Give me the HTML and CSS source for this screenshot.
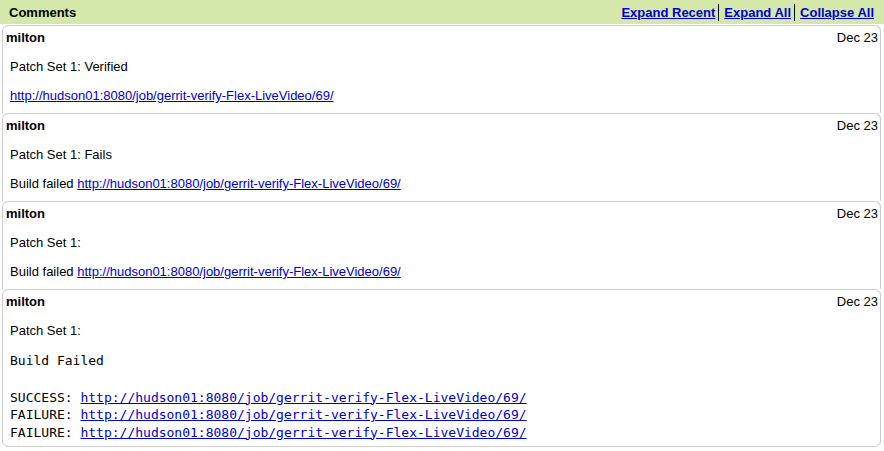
FILE: index.html
```html
<!DOCTYPE html>
<html>
<head>
<meta charset="utf-8">
<link rel="stylesheet" href="styles.css">
</head>
<body>
<div class="header">
  <span class="title">Comments</span>
  <span class="actions">
    <a href="#" class="action first">Expand Recent</a><a href="#" class="action">Expand All</a><a href="#" class="action">Collapse All</a>
  </span>
</div>

<div class="panel">
  <div class="panel-head"><span class="author">milton</span><span class="date">Dec 23</span></div>
  <div class="msg">
    <p>Patch Set 1: Verified</p>
    <p><a href="#">http://hudson01:8080/job/gerrit-verify-Flex-LiveVideo/69/</a></p>
  </div>
</div>

<div class="panel">
  <div class="panel-head"><span class="author">milton</span><span class="date">Dec 23</span></div>
  <div class="msg">
    <p>Patch Set 1: Fails</p>
    <p>Build failed <a href="#">http://hudson01:8080/job/gerrit-verify-Flex-LiveVideo/69/</a></p>
  </div>
</div>

<div class="panel">
  <div class="panel-head"><span class="author">milton</span><span class="date">Dec 23</span></div>
  <div class="msg">
    <p>Patch Set 1:</p>
    <p>Build failed <a href="#">http://hudson01:8080/job/gerrit-verify-Flex-LiveVideo/69/</a></p>
  </div>
</div>

<div class="panel last">
  <div class="panel-head"><span class="author">milton</span><span class="date">Dec 23</span></div>
  <div class="msg">
    <p>Patch Set 1:</p>
    <pre class="code gap">Build Failed</pre>
    <pre class="code">SUCCESS: <a href="#">http://hudson01:8080/job/gerrit-verify-Flex-LiveVideo/69/</a>
FAILURE: <a href="#">http://hudson01:8080/job/gerrit-verify-Flex-LiveVideo/69/</a>
FAILURE: <a href="#">http://hudson01:8080/job/gerrit-verify-Flex-LiveVideo/69/</a></pre>
  </div>
</div>
</body>
</html>
```

FILE: styles.css
```css
html, body {
  margin: 0;
  padding: 0;
  background: #ffffff;
}

body {
  font-family: "Liberation Sans", Arial, sans-serif;
  font-size: 13px;
  color: #000;
}

a {
  color: #0000cc;
  text-decoration: underline;
}

.header {
  display: flex;
  justify-content: space-between;
  align-items: center;
  height: 24px;
  background: #d4e9a9;
  padding: 0 10px 0 9px;
  margin-bottom: 1px;
}

.title {
  font-weight: bold;
}

.actions {
  display: flex;
  align-items: center;
}

.action {
  font-weight: bold;
  color: #0000cc;
  padding: 0 0 0 5px;
  margin-left: 3px;
  border-left: 1px solid #000;
  line-height: 17px;
}

.action.first {
  border-left: none;
  padding-left: 0;
  margin-left: 0;
}

.panel {
  margin: 0 3px 0 2px;
  border: 1px solid #cccccc;
  border-bottom: none;
  border-radius: 6px 6px 0 0;
  padding: 4px 2px 9px 3px;
}

.panel.last {
  border-bottom: 1px solid #cccccc;
  border-radius: 6px;
  padding-bottom: 5px;
}

.panel-head {
  display: flex;
  justify-content: space-between;
  line-height: 16px;
}

.author {
  font-weight: bold;
}

.msg {
  padding-left: 4px;
  margin-top: 13px;
}

.msg p {
  margin: 0 0 13px 0;
  line-height: 16px;
}

.msg p:last-child {
  margin-bottom: 0;
}

.code {
  font-family: "DejaVu Sans Mono", "Liberation Mono", monospace;
  font-size: 13px;
  line-height: 17.5px;
  margin: 0;
}

.code.gap {
  margin-bottom: 19px;
}
```
